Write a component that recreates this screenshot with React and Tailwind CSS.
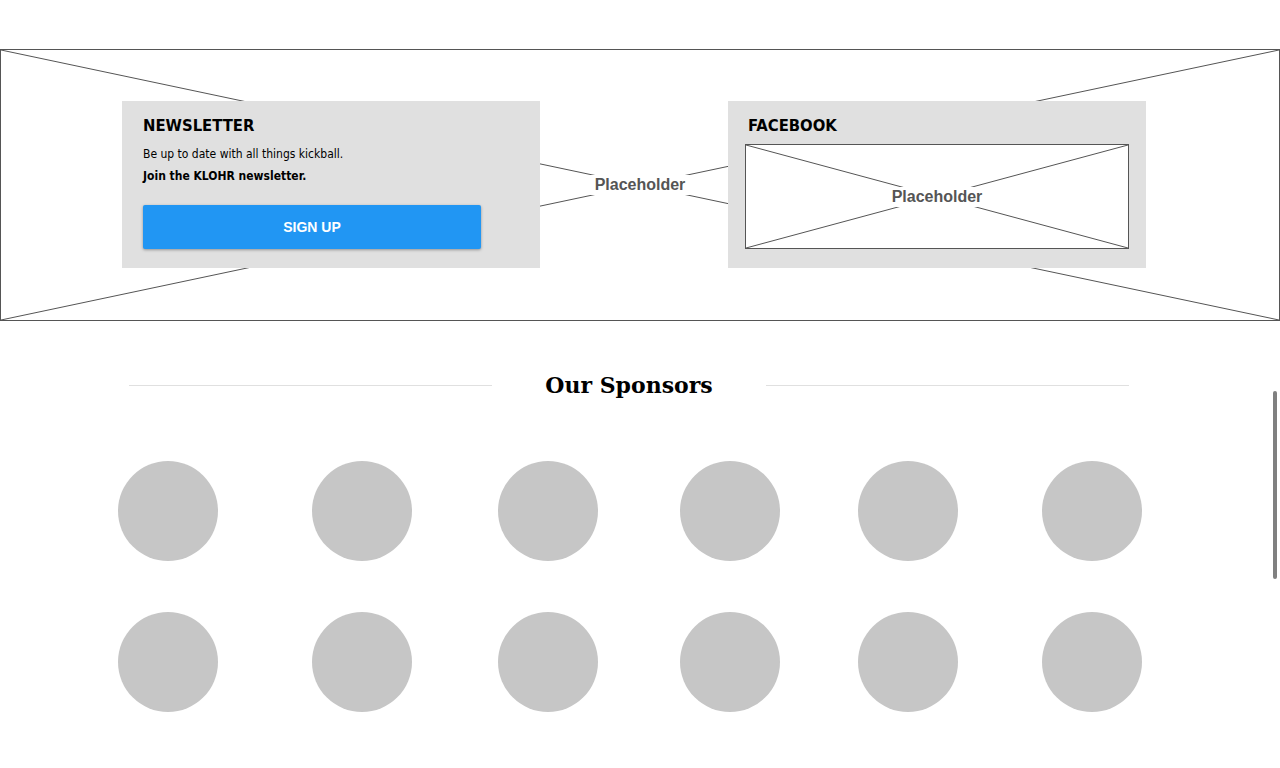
import React from 'react';

const Cross = ({ color = '#555555' }) => (
  <svg className="absolute inset-0 w-full h-full" preserveAspectRatio="none" viewBox="0 0 100 100">
    <line x1="0" y1="0" x2="100" y2="100" stroke={color} strokeWidth="1" vectorEffect="non-scaling-stroke" />
    <line x1="100" y1="0" x2="0" y2="100" stroke={color} strokeWidth="1" vectorEffect="non-scaling-stroke" />
  </svg>
);

const PlaceholderLabel = () => (
  <span className="relative bg-white px-[5px] text-[16px] font-bold leading-[20px] text-[#555555] font-['Liberation_Sans',Arial,sans-serif]">
    Placeholder
  </span>
);

const sponsorOffsets = ['ml-0', 'ml-[94px]', 'ml-[86px]', 'ml-[82px]', 'ml-[78px]', 'ml-[84px]'];

const SponsorRow = () => (
  <div className="flex pl-[118px]">
    {sponsorOffsets.map((ml, i) => (
      <div key={i} className={`${ml} w-[100px] h-[100px] rounded-full bg-[#c6c6c6] shrink-0`} />
    ))}
  </div>
);

export default function App() {
  return (
    <div className="relative min-h-[768px] bg-white font-['DejaVu_Sans_Condensed','DejaVu_Sans',sans-serif]">
      {/* Hero placeholder with newsletter + facebook */}
      <div className="pt-[49px]">
        <div className="relative h-[272px] border border-[#555555]">
          <Cross />
          <div className="relative flex items-center pl-[121px] pt-[51px]">
            <div className="w-[418px] h-[167px] bg-[#e0e0e0] px-[21px] pt-[15px]">
              <h2 className="text-[16.5px] leading-[20px] font-bold text-black">NEWSLETTER</h2>
              <p className="mt-[7px] text-[12px] leading-[22px] text-black">Be up to date with all things kickball.</p>
              <p className="text-[12px] leading-[22px] font-bold text-black">Join the KLOHR newsletter.</p>
              <button className="mt-[18px] w-[338px] h-[44px] rounded-[2px] bg-[#2196f3] text-white text-[14px] font-bold font-['Liberation_Sans',Arial,sans-serif] shadow-[0_1px_3px_rgba(0,0,0,0.35)]">
                SIGN UP
              </button>
            </div>
            <div className="w-[188px] self-stretch flex items-center justify-center pl-[12px]">
              <PlaceholderLabel />
            </div>
            <div className="w-[418px] h-[167px] bg-[#e0e0e0] pl-[17px] pr-[17px] pt-[15px]">
              <h2 className="pl-[3px] text-[16.5px] leading-[20px] font-bold text-black">FACEBOOK</h2>
              <div className="relative mt-[8px] w-[384px] h-[105px] bg-white border border-[#555555] flex items-center justify-center">
                <Cross />
                <PlaceholderLabel />
              </div>
            </div>
          </div>
        </div>
      </div>

      {/* Sponsors */}
      <div className="mt-[48px] w-[1000px] flex items-center ml-[129px]">
        <div className="flex-1 h-px bg-[#e0e0e0]" />
        <h2 className="px-[53px] text-[22px] leading-[32px] font-bold text-black font-['DejaVu_Serif',Georgia,serif]">
          Our Sponsors
        </h2>
        <div className="flex-1 h-px bg-[#e0e0e0]" />
      </div>

      <div className="mt-[60px] flex flex-col gap-[51px]">
        <SponsorRow />
        <SponsorRow />
      </div>

      {/* overlay scrollbar */}
      <div className="fixed right-[3px] top-[391px] w-[4px] h-[188px] rounded-full bg-[#808080]" />
    </div>
  );
}
